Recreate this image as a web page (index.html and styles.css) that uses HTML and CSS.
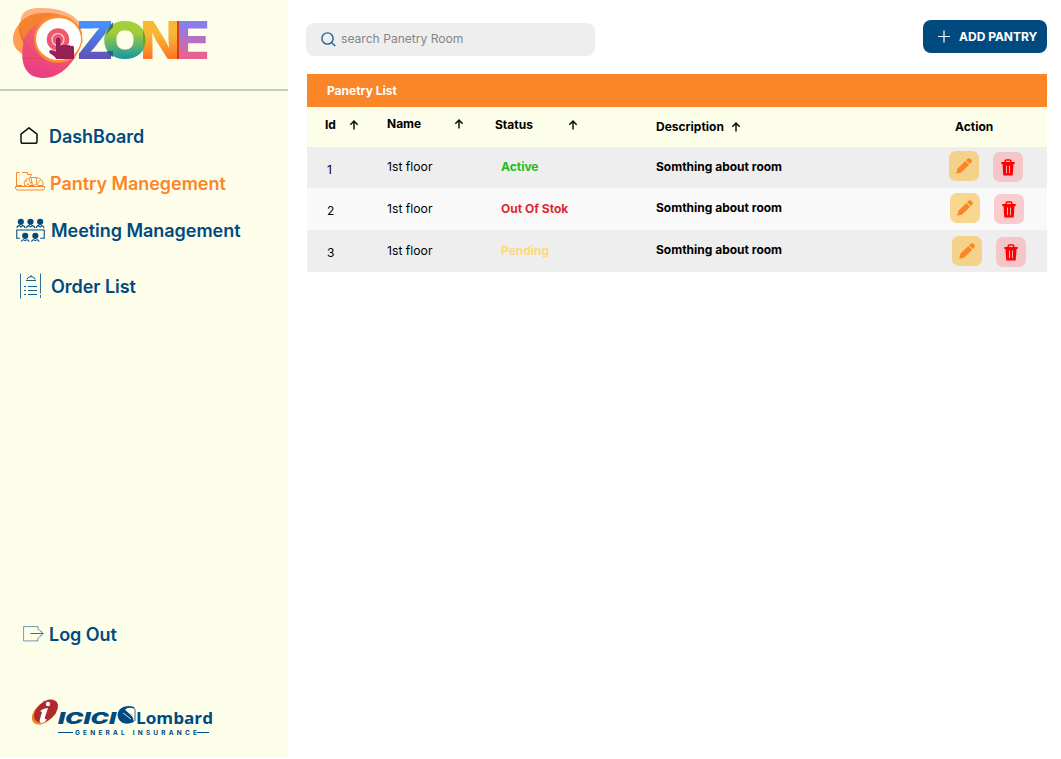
FILE: index.html
```html
<!DOCTYPE html>
<html lang="en">
<head>
<meta charset="utf-8">
<title>Ozone - Pantry Management</title>
<link rel="stylesheet" href="styles.css">
</head>
<body>
<svg class="defs" width="0" height="0" aria-hidden="true">
  <symbol id="arrow" viewBox="0 0 10 10"><path d="M5 9.500V1.200M1.300 4.800L5 1.100l3.700 3.700" fill="none" stroke="#111" stroke-width="1.500"/></symbol>
  <symbol id="pencil" viewBox="0 0 16 16"><path d="M.3 15.700l1.100-4.900 7.900-7.900 3.800 3.800-7.900 7.900zM10 2.200l1.200-1.200c1.100-1.100 2.300-1.100 3.200-.2l.8.8c.9.9.9 2.100-.2 3.200l-1.200 1.200z" fill="#fa8628"/></symbol>
  <symbol id="trash" viewBox="0 0 14 17"><path d="M.3 3h13.400v2H.3zM1.500 5h11l-.8 11.500H2.300z" fill="#f00"/><path d="M4.200 3V2q0-1 1-1h3.600q1 0 1 1v1" fill="none" stroke="#f00" stroke-width="1.500"/><path d="M5.500 6.500v7.700M8.500 6.500v7.700" stroke="#f5c4c4" stroke-width=".9"/></symbol>
</svg>
<div class="app">
  <aside class="sidebar">
    <header class="brand">
      <svg width="220" height="89" viewBox="0 0 220 89">
        <defs>
          <linearGradient id="gp" x1=".7" y1="0" x2=".3" y2="1"><stop offset="0" stop-color="#fa7b55"/><stop offset=".5" stop-color="#f25672"/><stop offset="1" stop-color="#e93a85"/></linearGradient>
          <linearGradient id="gz" x1="0" y1="0" x2="0" y2="1"><stop offset=".25" stop-color="#4690ff"/><stop offset=".8" stop-color="#6050b4"/></linearGradient>
          <linearGradient id="go" gradientUnits="userSpaceOnUse" x1="0" y1="20" x2="0" y2="60"><stop offset=".3" stop-color="#a5cf38"/><stop offset=".95" stop-color="#1b98a0"/></linearGradient>
          <linearGradient id="gn" x1="0" y1="0" x2="0" y2="1"><stop offset=".42" stop-color="#f7b733"/><stop offset=".78" stop-color="#ff7526"/></linearGradient>
          <linearGradient id="ge" x1="0" y1="0" x2="0" y2="1"><stop offset=".25" stop-color="#8580ec"/><stop offset=".78" stop-color="#ee608c"/></linearGradient>
        </defs>
        <path d="M21 25C19 13 27 8 39 8c18-1 34 5 41 15l3 19-20 17-31-5C24 47 22 37 21 25z" fill="#ffb27e"/>
        <path d="M13 38c1-12 12-23 29-25 19-2 38 8 40 20 2 14-10 25-34 26-20 1-36-7-35-21z" fill="#ff9e52"/>
        <path d="M19 24c5-7 13-11 24-11 17-1 33 7 38 17 2 11-2 23-13 27l-36-2C24 48 19 37 19 24z" fill="#f48231"/>
        <path d="M24 40c4-12 17-22 32-22 18 0 27 10 24 27-4 17-20 34-38 33-20-1-22-20-18-38z" fill="url(#gp)"/>
        <path d="M19 28c2 11 9 21 19 29M22 58h20" fill="none" stroke="#d9443d" stroke-width="1" opacity=".6"/>
        <circle cx="58" cy="39" r="24" fill="#ff8c2d"/>
        <ellipse cx="58.500" cy="39" rx="22.500" ry="21" fill="#fff"/>
        <circle cx="58" cy="39.500" r="11.300" fill="#ed5870"/>
        <circle cx="58" cy="39.500" r="6" fill="none" stroke="#ffd9d9" stroke-width="1.200"/>
        <path d="M56 40q0-2.500 2.200-2.500T60.500 40v6q1.500-2 3.500-.7 2-1.300 3.700.2 1.800-1 3 .6 3.300-.9 3.300 1.400V59H56q-1-3-6-5.500-2-3 1-3.500 3 0 5 1.500z" fill="#962056"/>
        <g class="zone">
          <text x="76" y="59" textLength="38" lengthAdjust="spacingAndGlyphs" fill="url(#gz)">Z</text>
          <text class="ring" x="103" y="57.500" textLength="44" lengthAdjust="spacingAndGlyphs" fill="url(#go)" stroke="url(#go)">O</text>
          <text x="140" y="59" textLength="41" lengthAdjust="spacingAndGlyphs" fill="url(#gn)">N</text>
          <text x="175" y="59" textLength="35" lengthAdjust="spacingAndGlyphs" fill="url(#ge)">E</text>
        </g>
        <path d="M113 22v5l-7 8q2-8 7-13zM106 49q2 6 7 8v-6h-6z" fill="#205777" opacity=".8"/>
        <path d="M143 30q5 10 0 20z" fill="#65a52d"/>
        <path d="M177 21h2v38h-2z" fill="#d63d1b"/>
      </svg>
    </header>
    <nav class="menu">
      <a class="item home"><svg width="18" height="18" viewBox="0 0 18 18"><path d="M1 7.200L9 .8l8 6.400V14.500q0 1.800-1.800 1.800H2.800Q1 16.300 1 14.500z" fill="none" stroke="#111" stroke-width="1.500" stroke-linejoin="round"/></svg><span>DashBoard</span></a>
      <a class="item pantry"><svg width="30" height="19" viewBox="0 0 30 19" fill="none" stroke="#fa8628" stroke-width="1"><path d="M1.500 14V.5h3M7 .5h5.500v2h4L15 5M1.500 12l1 1.500H7M.5 14.500h29v2l-1 1.500H2L.5 16.500zM9.500 13.500c-1-4 1-7 4-7l2-1h6c5 1 7 4 6.500 8h-5l-1-2-3 2h-5l-1-2-2 2zM13.500 6.500l3 6M16 5.500l1.500 8M21 5.500l1 6M26 7.500l-4 4M12 8l-1 2"/></svg><span>Pantry Manegement</span></a>
      <a class="item meeting"><svg width="29" height="24" viewBox="0 0 30 24"><g fill="#004a80"><circle cx="5" cy="3.500" r="3.200"/><circle cx="15" cy="3.500" r="3.200"/><circle cx="25" cy="3.500" r="3.200"/><circle cx="9.500" cy="18" r="3.200"/><circle cx="20" cy="18" r="3.200"/></g><path d="M1 10q0-2.500 2.500-2.500L5 9l1.500-1.500Q9 7.500 9.500 10M11 10q0-2.500 2.500-2.500L15 9l1.500-1.500Q19 7.500 19.500 10M21 10q0-2.500 2.500-2.500L25 9l1.500-1.500Q28.500 7.500 29 10M4 20.500H.8v-8.500h28.400v8.500H25M5.500 24q.5-2 2.500-2l1.500 1L11 22q2 0 2.500 2M16 24q.5-2 2.500-2l1.500 1 1.500-1q2 0 2.500 2" fill="none" stroke="#004a80" stroke-width="1.100"/></svg><span>Meeting Management</span></a>
      <a class="item order"><svg width="22" height="26" viewBox="0 0 22 26" fill="none" stroke="#004a80" stroke-width="1"><path d="M.5.500v25M20.500.5v20M20.500 22v3" opacity=".8"/><path d="M6 7.500h10M7 6.500q0-2.500 4-3Q15 4 15 6.500M11 2v1.500M4 13.500h2M8 13.500h9M4 17.500h2M8 17.500h9M4 21.500h2M8 21.500h9" stroke-width=".9"/></svg><span>Order List</span></a>
    </nav>
    <a class="item logout"><svg width="21" height="16" viewBox="0 0 21 16" fill="none" stroke="#004a80" stroke-width=".8"><path d="M15 4V.6H.6v14.300H15V11.500" opacity=".7"/><path d="M7.500 7.500H20M16 3.500l4 4-4 4"/></svg><span>Log Out</span></a>
    <footer class="insurer">
      <svg width="184" height="40" viewBox="0 0 184 40">
        <ellipse cx="11.800" cy="14" rx="14" ry="9" transform="rotate(-43 11.800 14)" fill="#f58220"/>
        <ellipse cx="14" cy="12" rx="14" ry="9" transform="rotate(-43 14 12)" fill="#ad2a2f"/>
        <circle cx="16" cy="5" r="2.200" fill="#fff"/>
        <path d="M8 12q4-3 8-3l-3 9q-1 3 2 2-2 4-6 4-2-1-1-4l2-7z" fill="#fff"/>
        <g fill="#004a80">
          <text class="icici" x="26" y="24.500" textLength="58" lengthAdjust="spacingAndGlyphs">ICICI</text>
          <path d="M103 10l-3-1q-5-1-7 2l7 5 2 7q-9 4-14-1-5-6 0-12 6-5 14-2z"/>
          <path d="M91 14l8 6M95 12l6 6V11" fill="none" stroke="#fff" stroke-width=".8"/><path d="M103 10v12" stroke="#004a80" stroke-width=".8"/>
          <text class="lombard" x="104" y="24.500" textLength="77" lengthAdjust="spacingAndGlyphs">Lombard</text>
          <text class="general" x="43" y="35.500" textLength="122">GENERAL INSURANCE</text>
        </g>
        <path d="M26 33.500h15M165 33.500h12" stroke="#004a80" stroke-width="1"/>
      </svg>
    </footer>
  </aside>
  <main class="content">
    <div class="toolbar">
      <label class="search"><svg width="15" height="15" viewBox="0 0 15 15" fill="none" stroke="#256293" stroke-width="1.400"><circle cx="6.500" cy="6.500" r="5.600"/><path d="M10.700 10.700l3.600 3.300"/></svg><span>search Panetry Room</span></label>
      <button class="add"><svg width="12" height="13" viewBox="0 0 12 13"><path d="M6 .5v12M0 6.500h12" stroke="#fff" stroke-width="1.200"/></svg><span>ADD PANTRY</span></button>
    </div>
    <section class="table">
      <h1 class="title">Panetry List</h1>
      <div class="row head">
        <div class="c-id"><span>Id</span><svg class="arrow"><use href="#arrow"/></svg></div>
        <div class="c-name"><span>Name</span><svg class="arrow"><use href="#arrow"/></svg></div>
        <div class="c-status"><span>Status</span><svg class="arrow"><use href="#arrow"/></svg></div>
        <div class="c-desc"><span>Description</span><svg class="arrow"><use href="#arrow"/></svg></div>
        <div class="c-action"><span>Action</span></div>
      </div>
      <div class="row first">
        <div class="c-id">1</div><div class="c-name">1st floor</div><div class="c-status active">Active</div><div class="c-desc">Somthing about room</div>
        <div class="c-action"><span class="btn edit"><svg><use href="#pencil"/></svg></span><span class="btn del"><svg><use href="#trash"/></svg></span></div>
      </div>
      <div class="row second">
        <div class="c-id">2</div><div class="c-name">1st floor</div><div class="c-status out">Out Of Stok</div><div class="c-desc">Somthing about room</div>
        <div class="c-action"><span class="btn edit"><svg><use href="#pencil"/></svg></span><span class="btn del"><svg><use href="#trash"/></svg></span></div>
      </div>
      <div class="row third">
        <div class="c-id">3</div><div class="c-name">1st floor</div><div class="c-status pending">Pending</div><div class="c-desc">Somthing about room</div>
        <div class="c-action"><span class="btn edit"><svg><use href="#pencil"/></svg></span><span class="btn del"><svg><use href="#trash"/></svg></span></div>
      </div>
    </section>
  </main>
</div>
</body>
</html>
```

FILE: styles.css
```css
* { box-sizing: border-box; }
body { margin: 0; background: #fff; font-family: Inter, sans-serif; color: #000; }
svg { display: block; flex: none; }
.defs { position: absolute; }
.app { display: flex; height: 759px; overflow: hidden; }

.sidebar { display: flex; flex-direction: column; width: 288px; height: 758px; background: #fdfeea; flex: none; }
.brand { height: 91px; border-bottom: 2px solid #cbcbc5; }
.zone { font: 800 52.500px Inter, sans-serif; }
.ring { font-size: 49px; stroke-width: 1.800px; }
.menu { height: 525px; padding-top: 25px; }
.item { display: flex; align-items: center; height: 40px; color: #004a80; font-size: 18px; font-weight: 600; line-height: 24px; letter-spacing: -.04px; white-space: nowrap; }
.item span { padding-top: 2px; }
.home { padding-left: 20px; gap: 11px; }
.home svg { margin-top: -1px; }
.pantry { padding-left: 15px; gap: 5px; margin-top: 7px; color: #fa8628; }
.pantry svg { margin-top: -3px; }
.meeting { padding-left: 16px; gap: 6px; margin-top: 7px; }
.meeting svg { margin-top: -1px; }
.meeting span { padding-top: 1px; }
.order { padding-left: 20px; gap: 9px; margin-top: 16px; }
.logout { padding-left: 23px; gap: 5px; margin-top: -2px; }
.insurer { padding: 45px 0 0 32px; }
.icici { font: italic 900 16px Inter, sans-serif; }
.lombard { font: 700 16.500px "Open Sans", sans-serif; }
.general { font: 700 6.500px Inter, sans-serif; }

.content { flex: 1; padding: 20px 14px 0 19px; }
.toolbar { display: flex; justify-content: space-between; align-items: flex-start; height: 54px; margin-left: -1px; }
.search { display: flex; align-items: center; gap: 5px; width: 289px; height: 33px; margin-top: 3px; padding-left: 15px; border-radius: 8px; background: #eee; color: #858585; font-size: 12.100px; }
.search span { margin-top: -2px; }
.add { display: flex; align-items: center; gap: 9px; width: 124px; height: 33px; padding: 0 0 0 15px; border: 0; border-radius: 8px; background: #004a80; color: #fff; font: 700 12px Inter, sans-serif; white-space: nowrap; }

.title { margin: 0; height: 33px; padding-left: 20px; background: #fa8628; color: #fff; font-size: 12px; font-weight: 700; line-height: 34px; }
.row { display: grid; grid-template-columns: 80px 108px 161px 286px 1fr; height: 42px; background: #eee; font-size: 12px; line-height: 16px; white-space: nowrap; }
.head { height: 40px; background: #fdfeea; font-weight: 700; }
.head > div { display: flex; align-items: center; height: 16px; }
.arrow { width: 10px; height: 10px; }
.head .c-id { margin-top: 10px; padding: 0 0 0 18px; gap: 13px; }
.head .c-name { margin-top: 9px; gap: 33px; }
.head .c-status { margin-top: 10px; gap: 35px; }
.head .c-desc { margin-top: 12px; gap: 7px; }
.head .c-action { margin-top: 12px; padding-left: 13px; }
.c-id { padding: 15px 0 0 20px; }
.c-name, .c-status { padding-top: 13px; }
.c-desc { padding-top: 12px; }
.first .c-name, .first .c-status { padding-top: 12px; }
.head > .c-name, .head > .c-status, .head > .c-desc { padding-top: 0; }
.row:not(.head) .c-name { font-size: 12.200px; }
.c-status, .c-desc { font-weight: 700; }
.active, .out, .pending { padding-left: 6px; }
.active { color: #1cbc20; }
.out { color: #da2933; }
.pending { color: #ffd978; }
.c-action { display: flex; gap: 14px; }
.first { height: 41px; }
.second { background: #f9f9f9; }
.first .c-action { padding: 4px 0 0 7px; }
.second .c-action { padding: 5px 0 0 8px; }
.third .c-action { padding: 6px 0 0 10px; }
.btn { display: flex; align-items: center; justify-content: center; width: 30px; height: 30px; border-radius: 7px; }
.edit { background: rgba(250, 181, 35, .5); }
.edit svg { width: 16px; height: 16px; }
.del { margin-top: 1px; background: rgba(250, 158, 160, .5); }
.third .del { margin-top: 1px; }
.del svg { width: 14px; height: 17px; }
```
